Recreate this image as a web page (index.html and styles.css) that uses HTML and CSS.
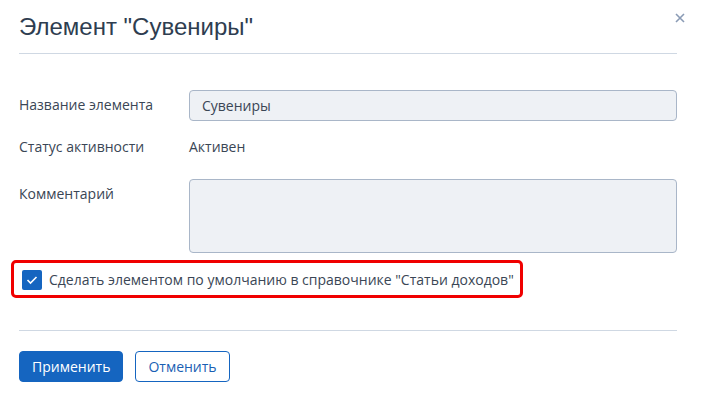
FILE: index.html
```html
<!DOCTYPE html>
<html lang="ru">
<head>
  <meta charset="UTF-8" />
  <meta name="viewport" content="width=device-width, initial-scale=1.0" />
  <title>Элемент "Сувениры"</title>
  <link rel="stylesheet" href="styles.css">
</head>
<body>
  <div class="modal">
    <div class="modal-header">
      <h1 class="modal-title">Элемент "Сувениры"</h1>
      <button class="close" title="Закрыть">
        <svg width="10" height="10" viewBox="0 0 10 10">
          <path d="M1 1 L9 9 M9 1 L1 9" stroke="#8a9bb5" stroke-width="1.6" fill="none" />
        </svg>
      </button>
    </div>

    <div class="form">
      <div class="row">
        <label class="label">Название элемента</label>
        <input class="field" value="Сувениры" />
      </div>
      <div class="row row-status">
        <span class="label">Статус активности</span>
        <span class="value">Активен</span>
      </div>
      <div class="row">
        <label class="label">Комментарий</label>
        <textarea class="field area"></textarea>
      </div>
    </div>

    <label class="default-check">
      <span class="box">
        <svg width="12" height="10" viewBox="0 0 12 10">
          <path d="M1.5 5 L4.5 8 L10.5 2" stroke="#fff" stroke-width="1.6" fill="none" />
        </svg>
      </span>
      <span>Сделать элементом по умолчанию в справочнике "Статьи доходов"</span>
    </label>

    <div class="modal-footer">
      <button class="btn btn-primary">Применить</button>
      <button class="btn btn-outline">Отменить</button>
    </div>
  </div>
</body>
</html>
```

FILE: styles.css
```css
body {
  margin: 0;
  background: #fff;
  font-family: 'Open Sans', 'Noto Sans', sans-serif;
  font-size: 14px;
  color: #3a4655;
}

.modal {
  width: 658px;
  padding: 13px 0 0 19px;
}

.modal-header {
  display: flex;
  justify-content: space-between;
  align-items: flex-start;
  padding-bottom: 12px;
  border-bottom: 1px solid #cfd8e3;
}

.modal-title {
  margin: 0;
  font-family: 'Liberation Sans', Arial, sans-serif;
  font-weight: normal;
  font-size: 24px;
  line-height: 28px;
  color: #2e3d50;
}

.close {
  border: none;
  background: none;
  padding: 0;
  margin-right: -8px;
  width: 10px;
  height: 10px;
  cursor: pointer;
}

.close svg {
  display: block;
}

.form {
  margin-top: 36px;
}

.row {
  display: grid;
  grid-template-columns: 170px 1fr;
  margin-bottom: 11px;
}

.row-status {
  min-height: 36px;
}

.label,
.value {
  padding-top: 5px;
  line-height: 20px;
}

.field {
  box-sizing: border-box;
  height: 31px;
  width: 100%;
  margin: 0;
  padding: 0 12px;
  border: 1px solid #a9b6c8;
  border-radius: 4px;
  background: #eef1f5;
  font-family: inherit;
  font-size: 14px;
  color: #3a4655;
}

.area {
  height: 74px;
  resize: none;
  display: block;
}

.default-check {
  display: inline-flex;
  align-items: center;
  gap: 7px;
  margin: -4px 0 0 -8px;
  padding: 7px 6px 5px 8px;
  border: 3px solid #f00000;
  border-radius: 5px;
  line-height: 20px;
  cursor: pointer;
}

.box {
  width: 20px;
  height: 20px;
  border-radius: 2px;
  background: #1565c0;
  display: flex;
  align-items: center;
  justify-content: center;
}

.modal-footer {
  margin-top: 32px;
  padding-top: 20px;
  border-top: 1px solid #cfd8e3;
  display: flex;
  gap: 12px;
}

.btn {
  box-sizing: border-box;
  height: 31px;
  padding: 0 12px;
  border-radius: 4px;
  font-family: inherit;
  font-size: 14px;
  cursor: pointer;
}

.btn-primary {
  background: #1565c0;
  border: 1px solid #1565c0;
  color: #fff;
}

.btn-outline {
  background: #fff;
  border: 1px solid #1565c0;
  color: #1a5fb4;
}
```
